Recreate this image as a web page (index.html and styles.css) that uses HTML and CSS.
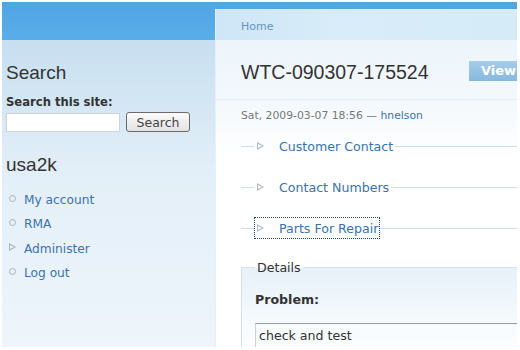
FILE: index.html
```html
<!DOCTYPE html>
<html>
<head>
<meta charset="utf-8">
<link rel="stylesheet" href="styles.css">
</head>
<body>
<div class="frame">
  <aside class="sidebar">
    <div class="block">
      <h2 class="block-title">Search</h2>
      <label class="search-label">Search this site:</label>
      <div class="search-row">
        <input class="search-input" type="text">
        <button class="search-btn">Search</button>
      </div>
    </div>
    <div class="block user-block">
      <h2 class="block-title">usa2k</h2>
      <ul class="menu">
        <li class="leaf"><a href="#">My account</a></li>
        <li class="leaf"><a href="#">RMA</a></li>
        <li class="collapsed"><a href="#">Administer</a></li>
        <li class="leaf"><a href="#">Log out</a></li>
      </ul>
    </div>
  </aside>
  <main class="main">
    <div class="breadcrumb"><a href="#">Home</a></div>
    <div class="title-row">
      <h1 class="title">WTC-090307-175524</h1>
      <span class="tab">View</span>
    </div>
    <div class="content">
      <div class="submitted">Sat, 2009-03-07 18:56 — <a href="#">hnelson</a></div>
      <div class="fs-collapsed first">
        <span class="fs-line-left"></span>
        <span class="fs-legend"><span class="tri"></span><a href="#">Customer Contact</a></span>
        <span class="fs-line"></span>
      </div>
      <div class="fs-collapsed">
        <span class="fs-line-left"></span>
        <span class="fs-legend"><span class="tri"></span><a href="#">Contact Numbers</a></span>
        <span class="fs-line"></span>
      </div>
      <div class="fs-collapsed">
        <span class="fs-line-left"></span>
        <span class="fs-legend focused"><span class="tri"></span><a href="#">Parts For Repair</a></span>
        <span class="fs-line"></span>
      </div>
      <fieldset class="details">
        <legend>Details</legend>
        <div class="field-label">Problem:</div>
        <div class="field-box">check and test</div>
      </fieldset>
    </div>
  </main>
</div>
</body>
</html>
```
FILE: styles.css
```css
html, body {
  margin: 0;
  padding: 0;
  background: #ffffff;
}
body {
  width: 520px;
  height: 350px;
  overflow: hidden;
  font-family: "DejaVu Sans", Verdana, sans-serif;
  color: #333;
}
a { color: #3a73ad; text-decoration: none; }

.frame {
  margin: 2px 3px 0 2px;
  height: 345px;
  display: flex;
  overflow: hidden;
  background: linear-gradient(to bottom, #4fa4e3 0, #5aaee8 38px, transparent 38px);
}

.sidebar {
  width: 213px;
  flex: none;
  padding: 0 0 0 4px;
  box-sizing: border-box;
  background: linear-gradient(to bottom, transparent 0, transparent 38px, #c7dff0 38px, #e3eff8 170px, #eef5fb 100%);
}
.block-title {
  margin: 59px 0 0 0;
  font-family: "Liberation Sans", Arial, sans-serif;
  font-weight: normal;
  font-size: 19px;
  line-height: 24px;
  color: #333;
}
.search-label {
  display: block;
  margin-top: 10px;
  font-weight: bold;
  font-size: 11.6px;
  line-height: 14px;
  color: #333;
}
.search-row {
  display: flex;
  align-items: center;
  gap: 6px;
  margin-top: 3px;
}
.search-input {
  width: 114px;
  height: 19px;
  box-sizing: border-box;
  border: 1px solid #c9d6e0;
  background: #fff;
  margin: 0;
  padding: 0;
}
.search-btn {
  width: 64px;
  height: 20px;
  box-sizing: border-box;
  border: 1px solid #6b6b6b;
  border-radius: 3px;
  background: linear-gradient(to bottom, #fbfbfb, #e2e2e2);
  font-family: "DejaVu Sans", Verdana, sans-serif;
  font-size: 12.5px;
  color: #444;
  padding: 0;
  margin: 0;
}
.user-block .block-title { margin-top: 21px; }
.menu {
  list-style: none;
  margin: 11px 0 0 0;
  padding: 0;
}
.menu li {
  position: relative;
  padding-left: 18px;
  font-size: 12.2px;
  line-height: 24.3px;
}
.menu li.leaf::before {
  content: "";
  position: absolute;
  left: 3px;
  top: 7px;
  width: 5px;
  height: 5px;
  border: 1px solid #a8b4bf;
  border-radius: 50%;
}
.menu li.collapsed::before {
  content: "";
  position: absolute;
  left: 3px;
  top: 6px;
  width: 0;
  height: 0;
  border-left: 7px solid #a8b4bf;
  border-top: 4.5px solid transparent;
  border-bottom: 4.5px solid transparent;
}
.menu li.collapsed::after {
  content: "";
  position: absolute;
  left: 4px;
  top: 8px;
  width: 0;
  height: 0;
  border-left: 4.5px solid #eaf3fa;
  border-top: 2.5px solid transparent;
  border-bottom: 2.5px solid transparent;
}

.main {
  flex: 1;
  margin-top: 7px;
  display: flex;
  flex-direction: column;
  border-left: 1px solid #e4f1fb;
  background: linear-gradient(to bottom, #edf5fb 31px, #f3f8fc 90px, #ffffff 150px);
}
.main > * { flex: none; }
.breadcrumb {
  height: 31px;
  box-sizing: border-box;
  padding: 11px 0 0 25px;
  background: linear-gradient(to right, #cfe6f6, #d8ecf9 40%, #d6ebf8);
  font-size: 11px;
  line-height: 14px;
}
.breadcrumb a { color: #6893bf; }
.title-row {
  height: 60px;
  box-sizing: border-box;
  display: flex;
  align-items: center;
  padding: 6px 0 0 25px;
  border-bottom: 1px solid #e3edf4;
}
.title {
  margin: 0;
  font-family: "Liberation Sans", Arial, sans-serif;
  font-weight: normal;
  font-size: 19.5px;
  color: #333;
  flex: 1;
  white-space: nowrap;
}
.tab {
  width: 48px;
  height: 20px;
  box-sizing: border-box;
  padding-left: 12px;
  background: linear-gradient(to bottom, #a6cdea, #86b8de);
  color: #fff;
  font-weight: bold;
  font-size: 13px;
  line-height: 20px;
  margin-top: -4px;
  white-space: nowrap;
  overflow: hidden;
}
.content {
  padding-left: 25px;
}
.submitted {
  margin-top: 9px;
  font-size: 10.8px;
  line-height: 14px;
  color: #777;
  white-space: nowrap;
}
.submitted a { color: #3a73ad; }
.fs-collapsed {
  display: flex;
  align-items: center;
  height: 24px;
  margin-top: 17px;
}
.fs-collapsed.first { margin-top: 11px; }
.fs-line-left {
  width: 13px;
  border-top: 1px solid #cfdde8;
}
.fs-line {
  flex: 1;
  border-top: 1px solid #cfdde8;
}
.fs-legend {
  display: flex;
  align-items: center;
  height: 22px;
  box-sizing: border-box;
  padding: 0 1px 0 2px;
  font-size: 12.6px;
  white-space: nowrap;
  border: 1px dotted transparent;
}
.fs-legend.focused { border-color: #1e3f6b; }
.tri {
  position: relative;
  width: 0;
  height: 0;
  margin-right: 15px;
  border-left: 7px solid #b0b8c0;
  border-top: 4.5px solid transparent;
  border-bottom: 4.5px solid transparent;
}
.tri::after {
  content: "";
  position: absolute;
  left: -6px;
  top: -2.5px;
  width: 0;
  height: 0;
  border-left: 4.5px solid #fff;
  border-top: 2.5px solid transparent;
  border-bottom: 2.5px solid transparent;
}
.details {
  margin: 20px 0 0 0;
  padding: 17px 0 0 13px;
  border: none;
  border-top: 1px solid #d5e2ec;
  border-left: 1px solid #d5e2ec;
  min-width: 0;
  background: linear-gradient(to bottom, #e7f1f9, #f7fbfd 60px, #ffffff 90px);
}
.details legend {
  padding: 0 2px;
  margin-left: 0;
  font-size: 12.6px;
  color: #333;
}
.field-label {
  font-weight: bold;
  font-size: 12.6px;
  line-height: 16px;
}
.field-box {
  margin-top: 15px;
  height: 30px;
  box-sizing: border-box;
  border-top: 1px solid #9b9b9b;
  border-left: 1px solid #d0d0d0;
  padding: 4px 0 0 3px;
  font-size: 12.6px;
  line-height: 16px;
  color: #333;
  white-space: nowrap;
}
```
